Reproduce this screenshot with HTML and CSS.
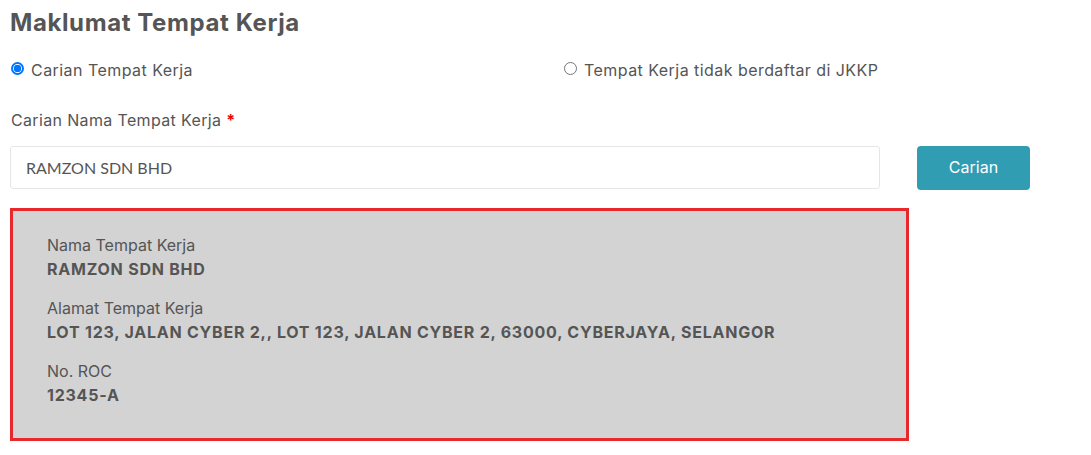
FILE: index.html
```html
<!DOCTYPE html>
<html>
<head>
<meta charset="utf-8">
<link rel="stylesheet" href="styles.css">
</head>
<body>
<div class="page">
  <h2 class="title">Maklumat Tempat Kerja</h2>
  <div class="radios">
    <label class="radio"><span class="dot checked"></span>Carian Tempat Kerja</label>
    <label class="radio"><span class="dot"></span>Tempat Kerja tidak berdaftar di JKKP</label>
  </div>
  <div class="field-label">Carian Nama Tempat Kerja <span class="req">*</span></div>
  <div class="search-row">
    <div class="input">RAMZON SDN BHD</div>
    <button class="btn">Carian</button>
  </div>
  <div class="result">
    <div class="item">
      <div class="k">Nama Tempat Kerja</div>
      <div class="v">RAMZON SDN BHD</div>
    </div>
    <div class="item">
      <div class="k">Alamat Tempat Kerja</div>
      <div class="v">LOT 123, JALAN CYBER 2,, LOT 123, JALAN CYBER 2, 63000, CYBERJAYA, SELANGOR</div>
    </div>
    <div class="item">
      <div class="k">No. ROC</div>
      <div class="v">12345-A</div>
    </div>
  </div>
</div>
</body>
</html>
```
FILE: styles.css
```css
* { box-sizing: border-box; }
body {
  margin: 0;
  background: #fff;
  font-family: "Inter", "Open Sans", sans-serif;
  color: #555;
}
.page {
  padding: 8px 0 0 10px;
  width: 1040px;
}
.title {
  margin: 0;
  font-size: 24px;
  line-height: 30px;
  font-weight: 700;
  letter-spacing: 0.6px;
  color: #555;
}
.radios {
  display: grid;
  grid-template-columns: 553px 1fr;
  margin-top: 21px;
  height: 22px;
  align-items: center;
}
.radio {
  display: flex;
  align-items: center;
  font-size: 16px;
  letter-spacing: 0.45px;
  color: #555;
  padding-left: 1px;
}
.dot {
  width: 13px;
  height: 13px;
  border-radius: 50%;
  border: 1px solid #767676;
  margin-right: 7px;
  background: #fff;
  flex: none;
  position: relative;
  top: -2px;
}
.dot.checked {
  border: 2px solid #0075ff;
  background: radial-gradient(circle, #0075ff 0 3.5px, #fff 4px);
}
.field-label {
  margin-top: 28px;
  font-size: 16px;
  line-height: 22px;
  letter-spacing: 0.35px;
  padding-left: 1px;
}
.req { color: #e00; font-weight: 700; }
.search-row {
  display: flex;
  align-items: flex-start;
  margin-top: 15px;
}
.input {
  width: 870px;
  height: 43px;
  border: 1px solid #e6e6e6;
  border-radius: 3px;
  padding: 0 15px;
  display: flex;
  align-items: center;
  font-family: "Lato", sans-serif;
  font-size: 16px;
  color: #555;
}
.btn {
  margin-left: 37px;
  width: 113px;
  height: 44px;
  border: 0;
  border-radius: 4px;
  background: #309db3;
  color: #fff;
  font-family: inherit;
  font-size: 16px;
  padding: 0 0 3px;
}
.result {
  margin-top: 18px;
  width: 899px;
  border: 3px solid #e8292b;
  background: #d3d3d3;
  padding: 22px 34px 16px;
}
.item { margin-bottom: 14px; }
.k { font-size: 16px; line-height: 24px; }
.v { font-size: 16px; line-height: 25px; font-weight: 700; letter-spacing: 0.77px; }
```
